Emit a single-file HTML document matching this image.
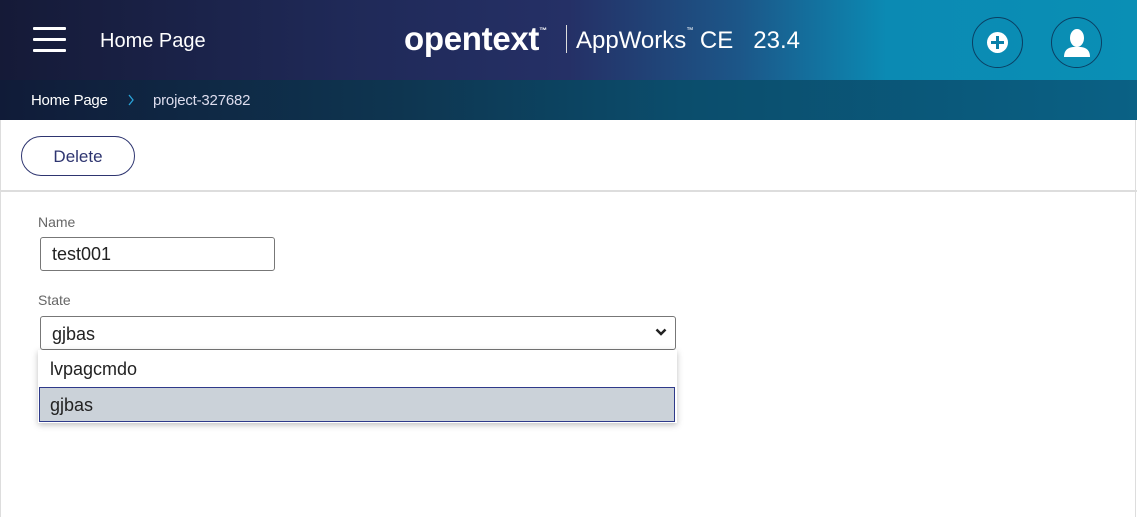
<!DOCTYPE html>
<html><head><style>
*{box-sizing:border-box;margin:0;padding:0}
body{width:1137px;height:517px;overflow:hidden;background:#fff;font-family:"Liberation Sans",sans-serif;position:relative}
.hdr{position:absolute;left:0;top:0;width:1137px;height:80px;background:linear-gradient(90deg,#151a37 0%,#1f2957 30%,#253066 50%,#1c5688 65%,#0b8ab3 78%,#0a8fb5 100%)}
.bc{position:absolute;left:0;top:80px;width:1137px;height:40px;background:linear-gradient(90deg,#101b38 0%,#0e3550 35%,#0b4d6c 60%,#0a6185 100%)}
.t{position:absolute;color:#fff;white-space:nowrap}
.circ{position:absolute;width:51px;height:51px;border-radius:50%;border:1.5px solid #0b3f63}
.lbl{position:absolute;left:38px;font-size:14px;color:#666}
.box{position:absolute;border:1px solid #777;border-radius:3px;font-size:18px;color:#222;padding-left:11px}
</style></head><body>
<div class="hdr"></div>
<div style="position:absolute;left:33px;top:27px;width:33px;height:3px;background:#fff;border-radius:1px"></div>
<div style="position:absolute;left:33px;top:38px;width:33px;height:3px;background:#fff;border-radius:1px"></div>
<div style="position:absolute;left:33px;top:49px;width:33px;height:3px;background:#fff;border-radius:1px"></div>
<div class="t" style="left:100px;top:30px;font-size:20px">Home Page</div>
<div class="t" style="left:404px;top:20px;font-size:33px;font-weight:bold;letter-spacing:-0.3px">opentext<span style="font-size:8px;vertical-align:top;position:relative;top:6px">™</span></div>
<div style="position:absolute;left:566px;top:25px;width:1px;height:28px;background:#ddd"></div>
<div class="t" style="left:576px;top:27px;font-size:24px">AppWorks<span style="font-size:7px;vertical-align:top">™</span> CE&nbsp;&nbsp; 23.4</div>
<div class="circ" style="left:972px;top:17px"></div>
<div style="position:absolute;left:987px;top:32px;width:21px;height:21px;border-radius:50%;background:#fff"></div>
<div style="position:absolute;left:991px;top:41px;width:13px;height:3px;background:#0a7fa8"></div>
<div style="position:absolute;left:996px;top:36px;width:3px;height:13px;background:#0a7fa8"></div>
<div class="circ" style="left:1051px;top:17px"></div>
<svg style="position:absolute;left:1062px;top:27px" width="30" height="32" viewBox="0 0 30 32"><ellipse cx="15" cy="11" rx="7" ry="9" fill="#fff"/><path d="M2 30 Q2 21 11 20 L19 20 Q28 21 28 30 Z" fill="#fff"/></svg>
<div class="bc"></div>
<div class="t" style="left:31px;top:92px;font-size:15px;letter-spacing:-0.3px">Home Page</div>
<svg style="position:absolute;left:127px;top:94px" width="8" height="12" viewBox="0 0 8 12"><path d="M2 1 L6 6 L2 11" stroke="#29a3d8" stroke-width="1.3" fill="none"/></svg>
<div class="t" style="left:153px;top:92px;font-size:15px;color:#dde;letter-spacing:-0.2px">project-327682</div>
<div style="position:absolute;left:0;top:120px;width:1px;height:397px;background:#ddd"></div>
<div style="position:absolute;right:1px;top:120px;width:1px;height:397px;background:#ddd"></div>
<div style="position:absolute;left:21px;top:136px;width:114px;height:40px;border:1px solid #2e3570;border-radius:20px;color:#2e3570;font-size:17px;text-align:center;line-height:40px">Delete</div>
<div style="position:absolute;left:0;top:190px;width:1137px;height:2px;background:#ddd"></div>
<div class="lbl" style="top:214px">Name</div>
<div class="box" style="left:40px;top:237px;width:235px;height:34px;line-height:33px">test001</div>
<div class="lbl" style="top:292px">State</div>
<div class="box" style="left:40px;top:316px;width:636px;height:34px;line-height:35px">gjbas
<svg style="position:absolute;right:8px;top:10px" width="12" height="10" viewBox="0 0 12 10"><path d="M1.5 2.5 L6 7 L10.5 2.5" stroke="#222" stroke-width="2.5" fill="none"/></svg></div>
<div style="position:absolute;left:38px;top:350px;width:639px;height:73px;background:#fff;box-shadow:0 2px 6px rgba(0,0,0,.25)">
<div style="position:absolute;left:12px;top:9px;font-size:18px;color:#222">lvpagcmdo</div>
<div style="position:absolute;left:1px;top:37px;width:636px;height:35px;background:#cbd2d9;border:1px solid #2e3a8a;font-size:18px;color:#222;padding-left:10px;line-height:34px">gjbas</div>
</div>
</body></html>
